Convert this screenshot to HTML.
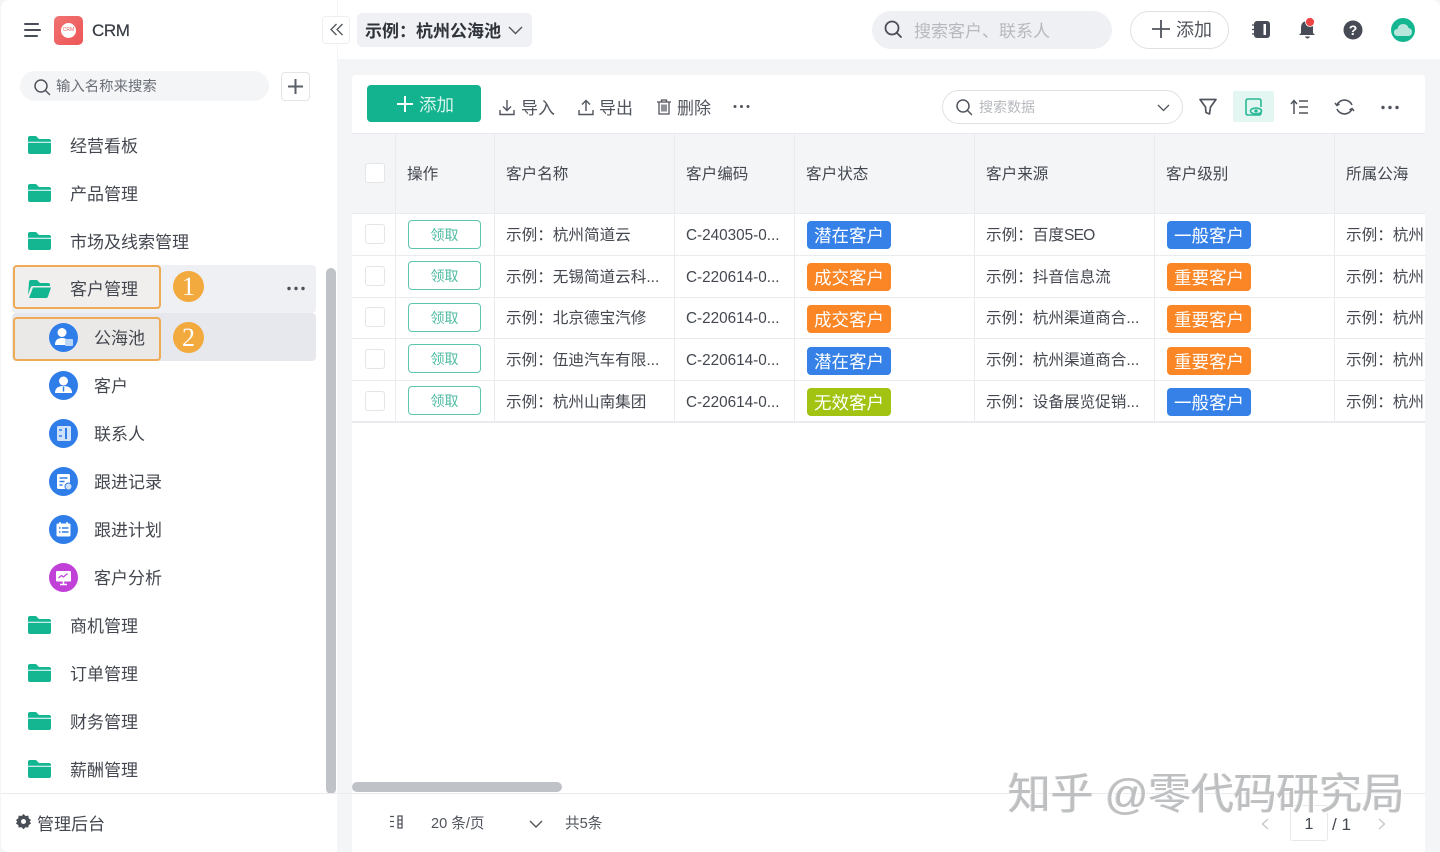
<!DOCTYPE html>
<html lang="zh"><head><meta charset="utf-8"><title>CRM</title>
<style>
*{box-sizing:border-box}
html,body{margin:0;padding:0}
body{width:1440px;height:852px;overflow:hidden;position:relative;background:#f4f5f7;font-family:"Liberation Sans","Noto Sans CJK SC",sans-serif;color:#3b3f47}
.a{position:absolute;white-space:nowrap}
.t{position:absolute;white-space:nowrap;line-height:20px;font-size:15.6px;color:#43474f;margin-top:1px}
.c{font-size:15.300px}
.s{letter-spacing:-.8px}
.m{position:absolute;white-space:nowrap;line-height:24px;font-size:17px;color:#43474f;margin-top:1px}
svg{position:absolute;display:block;overflow:visible}
.line{position:absolute;background:#e9ebee}
.tag{position:absolute;width:84px;height:28px;border-radius:4px;color:#fff;opacity:.97;font-size:17.500px;line-height:30px;text-align:center;white-space:nowrap}
.blue{background:#2f7de8}.or{background:#fb8320}.gr{background:#a0c20a}
.btn{position:absolute;left:408px;width:73px;height:29px;border:1px solid #5fc4ae;border-radius:4px;color:#4dbba2;font-size:14px;line-height:28px;text-align:center;background:#fff}
.cb{position:absolute;left:365px;width:20px;height:20px;border:1px solid #e3e5e8;border-radius:3px;background:#fff}
</style></head><body>

<!-- sidebar -->
<div class="a" style="left:1px;top:0;width:336px;height:852px;background:#fff;border-radius:8px 0 0 8px"></div>
<svg style="left:23px;top:22px" width="18" height="16" fill="none" stroke="#4a4e57" stroke-width="2" stroke-linecap="round"><path d="M2 2h13M2 8h15M2 14h12"/></svg>
<div class="a" style="left:54px;top:16px;width:29px;height:29px;border-radius:5px;background:linear-gradient(135deg,#f27272,#ec5656)"></div>
<div class="a" style="left:61px;top:23px;width:15px;height:15px;border-radius:50%;background:#fff;color:#ec5c5c;font-size:5px;line-height:15px;text-align:center">CRM</div>
<div class="a" style="left:92px;top:19px;font-size:17px;line-height:24px;letter-spacing:-.4px;color:#363a42;-webkit-text-stroke:.2px #363a42">CRM</div>

<div class="a" style="left:20px;top:71px;width:249px;height:30px;border-radius:15px;background:#f4f5f7"></div>
<svg style="left:34px;top:79px" width="16" height="16" fill="none" stroke="#50545c" stroke-width="1.500"><circle cx="7" cy="7" r="6"/><path d="M11.500 11.500l4 4" stroke-linecap="round"/></svg>
<div class="a" style="left:56px;top:77px;font-size:14.400px;line-height:20px;color:#6a6e76">输入名称来搜索</div>
<div class="a" style="left:281px;top:72px;width:29px;height:29px;border:1px solid #e2e4e7;border-radius:4px;background:#fff"></div>
<svg style="left:287px;top:78px" width="17" height="17" stroke="#5a5e66" stroke-width="2"><path d="M8.500 1v15M1 8.500h15"/></svg>

<div class="a" style="left:12px;top:265px;width:304px;height:48px;background:#eff0f4;border-radius:4px"></div>
<div class="a" style="left:12px;top:313px;width:304px;height:48px;background:#e6e8ed;border-radius:4px"></div>
<div class="a" style="left:13px;top:265px;width:148px;height:44px;border:2px solid #eeab53;border-radius:4px;background:#f1efee"></div>
<div class="a" style="left:13px;top:317px;width:148px;height:44px;border:2px solid #eeab53;border-radius:4px;background:#ebe9e7"></div>
<div class="a" style="left:173px;top:271px;width:31px;height:31px;border-radius:50%;background:#f2a93e;color:#fff;font:26px/31px 'Liberation Serif',serif;text-align:center">1</div>
<div class="a" style="left:173px;top:322px;width:31px;height:31px;border-radius:50%;background:#f2a93e;color:#fff;font:26px/31px 'Liberation Serif',serif;text-align:center">2</div>
<svg style="left:287px;top:286px" width="18" height="5" fill="#4b4f57"><circle cx="2" cy="2.500" r="1.700"/><circle cx="9" cy="2.500" r="1.700"/><circle cx="16" cy="2.500" r="1.700"/></svg>

<svg style="left:28px;top:136px" width="23" height="19" fill="#14b691"><path d="M0 2q0-2 2-2h6l3 3h10q2 0 2 2v.8H0zM0 6.800h23V16q0 2-2 2H2q-2 0-2-2z"/></svg>
<div class="m" style="left:70px;top:134px">经营看板</div>
<svg style="left:28px;top:184px" width="23" height="19" fill="#14b691"><path d="M0 2q0-2 2-2h6l3 3h10q2 0 2 2v.8H0zM0 6.800h23V16q0 2-2 2H2q-2 0-2-2z"/></svg>
<div class="m" style="left:70px;top:182px">产品管理</div>
<svg style="left:28px;top:232px" width="23" height="19" fill="#14b691"><path d="M0 2q0-2 2-2h6l3 3h10q2 0 2 2v.8H0zM0 6.800h23V16q0 2-2 2H2q-2 0-2-2z"/></svg>
<div class="m" style="left:70px;top:230px">市场及线索管理</div>
<svg style="left:28px;top:280px" width="23" height="19" fill="#14b691"><path d="M1 2q0-2 2-2h6l3 3h8q2 0 2 2v1H5q-2 0-2.500 2L0 15zM5 7.500h18l-3 9q-.5 1.500-2 1.500H1z"/></svg>
<div class="m" style="left:70px;top:277px">客户管理</div>

<!-- sub icons -->
<svg style="left:49px;top:323px" width="29" height="29"><circle cx="14.500" cy="14.500" r="14.500" fill="#2f7de8"/><circle cx="13" cy="9.500" r="4.500" fill="#fff"/><path d="M6 22q0-7 7-7t7 7z" fill="#fff"/><rect x="16" y="16" width="8" height="7" rx="1" fill="#bcd6f8"/></svg>
<div class="m" style="left:94px;top:326px">公海池</div>
<svg style="left:49px;top:371px" width="29" height="29"><circle cx="14.500" cy="14.500" r="14.500" fill="#2f7de8"/><circle cx="14.500" cy="10" r="4.500" fill="#fff"/><path d="M6 22q0-7 8.500-7T23 22z" fill="#fff"/><path d="M14.500 15.500v5" stroke="#2f7de8" stroke-width="1.500"/></svg>
<div class="m" style="left:94px;top:374px">客户</div>
<svg style="left:49px;top:419px" width="29" height="29"><circle cx="14.500" cy="14.500" r="14.500" fill="#2f7de8"/><rect x="8" y="7" width="14" height="15" rx="1.500" fill="#cfe1fa"/><rect x="16" y="9" width="2" height="11" fill="#2f7de8"/><path d="M10 11h3M10 17h3" stroke="#2f7de8" stroke-width="1.500"/></svg>
<div class="m" style="left:94px;top:422px">联系人</div>
<svg style="left:49px;top:467px" width="29" height="29"><circle cx="14.500" cy="14.500" r="14.500" fill="#2f7de8"/><rect x="8" y="7" width="13" height="15" rx="1.500" fill="#fff"/><path d="M10.500 11h8M10.500 14.500h5M10.500 18h3" stroke="#2f7de8" stroke-width="1.500"/><circle cx="19.500" cy="19.500" r="3.500" fill="#cfe1fa" stroke="#2f7de8"/></svg>
<div class="m" style="left:94px;top:470px">跟进记录</div>
<svg style="left:49px;top:515px" width="29" height="29"><circle cx="14.500" cy="14.500" r="14.500" fill="#2f7de8"/><rect x="7.500" y="8.500" width="14" height="13" rx="1.500" fill="#fff"/><path d="M11 7v3M18 7v3" stroke="#fff" stroke-width="1.500"/><path d="M10 13h1.500M13 13h6.500M10 17h1.500M13 17h6.500" stroke="#2f7de8" stroke-width="1.500"/></svg>
<div class="m" style="left:94px;top:518px">跟进计划</div>
<svg style="left:49px;top:563px" width="29" height="29"><circle cx="14.500" cy="14.500" r="14.500" fill="#c040d8"/><rect x="7" y="8" width="15" height="10.500" rx="1" fill="#fff"/><path d="M9.500 15l3-2.500 2 1.500 4-3.500" fill="none" stroke="#c040d8" stroke-width="1.200"/><path d="M11 21.500h7M14.500 18.500v3" stroke="#fff" stroke-width="1.500"/></svg>
<div class="m" style="left:94px;top:566px">客户分析</div>

<svg style="left:28px;top:616px" width="23" height="19" fill="#14b691"><path d="M0 2q0-2 2-2h6l3 3h10q2 0 2 2v.8H0zM0 6.800h23V16q0 2-2 2H2q-2 0-2-2z"/></svg>
<div class="m" style="left:70px;top:614px">商机管理</div>
<svg style="left:28px;top:664px" width="23" height="19" fill="#14b691"><path d="M0 2q0-2 2-2h6l3 3h10q2 0 2 2v.8H0zM0 6.800h23V16q0 2-2 2H2q-2 0-2-2z"/></svg>
<div class="m" style="left:70px;top:662px">订单管理</div>
<svg style="left:28px;top:712px" width="23" height="19" fill="#14b691"><path d="M0 2q0-2 2-2h6l3 3h10q2 0 2 2v.8H0zM0 6.800h23V16q0 2-2 2H2q-2 0-2-2z"/></svg>
<div class="m" style="left:70px;top:710px">财务管理</div>
<svg style="left:28px;top:760px" width="23" height="19" fill="#14b691"><path d="M0 2q0-2 2-2h6l3 3h10q2 0 2 2v.8H0zM0 6.800h23V16q0 2-2 2H2q-2 0-2-2z"/></svg>
<div class="m" style="left:70px;top:758px">薪酬管理</div>

<div class="a" style="left:326px;top:268px;width:10px;height:526px;background:#bfc2c7;border-radius:5px"></div>
<div class="line" style="left:1px;top:793px;width:336px;height:1px"></div>
<svg style="left:15px;top:813px" width="17" height="17"><path d="M8.500 1l2 2 2.800-.4.500 2.800 2.300 1.600-1.400 1.500 1.400 2-2.300 1.500-.5 2.500-2.800-.3-2 2-2-2-2.800.3-.5-2.500L.9 10.500l1.400-2L.9 7l2.300-1.600.5-2.800 2.800.4z" fill="#4a4e57"/><circle cx="8.500" cy="8.500" r="2.500" fill="#fff"/></svg>
<div class="m" style="left:37px;top:812px">管理后台</div>

<!-- top bar -->
<div class="a" style="left:338px;top:0;width:1102px;height:59px;background:#fff;border-radius:0 8px 0 0"></div>
<div class="a" style="left:322px;top:16px;width:28px;height:28px;background:#fff;border:1px solid #eceef0;border-radius:4px"></div>
<svg style="left:330px;top:23px" width="14" height="13" fill="none" stroke="#50545c" stroke-width="1.300"><path d="M6.500 1L1 6.500 6.500 12M12.500 1L7 6.500l5.500 5.500"/></svg>
<div class="a" style="left:357px;top:13px;width:175px;height:34px;background:#f0f1f4;border-radius:5px"></div>
<div class="a" style="left:365px;top:20px;font-size:17px;font-weight:700;line-height:24px;color:#2f333a">示例：杭州公海池</div>
<svg style="left:508px;top:26px" width="15" height="9" fill="none" stroke="#50545c" stroke-width="1.400"><path d="M1 1l6.500 6.500L14 1"/></svg>

<div class="a" style="left:872px;top:11px;width:240px;height:38px;border-radius:19px;background:#eff0f4"></div>
<svg style="left:884px;top:20px" width="20" height="20" fill="none" stroke="#4a4e57" stroke-width="1.800"><circle cx="8" cy="8" r="6.500"/><path d="M12.500 12.500l4.500 4.500" stroke-linecap="round"/></svg>
<div class="a" style="left:914px;top:20px;font-size:17px;line-height:24px;color:#b7b9be">搜索客户、联系人</div>
<div class="a" style="left:1130px;top:11px;width:99px;height:38px;border-radius:19px;background:#fff;border:1px solid #dfe1e5"></div>
<svg style="left:1152px;top:20px" width="18" height="18" stroke="#50545c" stroke-width="1.800"><path d="M9 0v18M0 9h18"/></svg>
<div class="a" style="left:1176px;top:18px;font-size:18px;line-height:24px;color:#50545c">添加</div>

<svg style="left:1252px;top:20px" width="19" height="19"><rect x="2" y="1" width="16" height="17" rx="3" fill="#474b55"/><rect x="11.500" y="4" width="2.500" height="11" fill="#fff"/><path d="M0 5h3M0 9.500h3M0 14h3" stroke="#474b55" stroke-width="1.300"/></svg>
<svg style="left:1298px;top:18px" width="19" height="22"><path d="M9.500 3q5.500 0 5.500 7v5l2 2H1l2-2v-5q0-7 6.500-7z" fill="#474b55"/><path d="M7 18.500h5q-1 2-2.500 2T7 18.500z" fill="#474b55"/><circle cx="12" cy="4" r="4.500" fill="#ee4444" stroke="#fff" stroke-width=".8"/></svg>
<svg style="left:1343px;top:20px" width="20" height="20"><circle cx="10" cy="10" r="9.500" fill="#474b55"/><text x="10" y="15" text-anchor="middle" font-family="Liberation Sans" font-weight="700" font-size="14" fill="#fff">?</text></svg>
<svg style="left:1391px;top:18px" width="24" height="24"><circle cx="12" cy="12" r="12" fill="#14b691"/><path d="M6.500 18q-3.500 0-3.500-3.500T6.500 11q1-5 5.500-5 4.500 0 5.500 4 3.500.5 3.500 4t-3.500 4z" fill="#b7e6dc"/></svg>

<!-- content card -->
<div class="a" style="left:352px;top:75px;width:1073px;height:777px;background:#fff;border-radius:3px 3px 0 0"></div>
<div class="a" style="left:367px;top:85px;width:114px;height:37px;background:#14b38f;border-radius:4px"></div>
<svg style="left:397px;top:96px" width="16" height="16" stroke="#fff" stroke-width="2"><path d="M8 0v16M0 8h16"/></svg>
<div class="a" style="left:419px;top:93px;font-size:17.500px;line-height:24px;color:#d8f4ec">添加</div>

<svg style="left:499px;top:99px" width="16" height="17" fill="none" stroke="#50545c" stroke-width="1.400"><path d="M8 1v10M4 7.500L8 11.500l4-4M1 11v4.500h14V11"/></svg>
<div class="a" style="left:521px;top:97px;font-size:17px;line-height:24px;color:#50545c">导入</div>
<svg style="left:578px;top:99px" width="16" height="17" fill="none" stroke="#50545c" stroke-width="1.400"><path d="M8 12V2M4 5.500L8 1.500l4 4M1 11v4.500h14V11"/></svg>
<div class="a" style="left:599px;top:97px;font-size:17px;line-height:24px;color:#50545c">导出</div>
<svg style="left:657px;top:99px" width="14" height="16" fill="none" stroke="#50545c" stroke-width="1.300"><path d="M0 3h14M4.500 3V1h5v2M2 3v12h10V3M5 5.500v7M7 5.500v7M9 5.500v7"/></svg>
<div class="a" style="left:677px;top:97px;font-size:17px;line-height:24px;color:#50545c">删除</div>
<svg style="left:733px;top:104px" width="17" height="5" fill="#50545c"><circle cx="2" cy="2.500" r="1.500"/><circle cx="8.500" cy="2.500" r="1.500"/><circle cx="15" cy="2.500" r="1.500"/></svg>

<div class="a" style="left:942px;top:90px;width:241px;height:34px;border-radius:17px;border:1px solid #dfe1e5;background:#fff"></div>
<svg style="left:956px;top:99px" width="17" height="17" fill="none" stroke="#50545c" stroke-width="1.500"><circle cx="7" cy="7" r="6"/><path d="M11.500 11.500l4 4" stroke-linecap="round"/></svg>
<div class="a" style="left:979px;top:97px;font-size:14px;line-height:20px;color:#b7b9be">搜索数据</div>
<svg style="left:1157px;top:104px" width="13" height="8" fill="none" stroke="#50545c" stroke-width="1.300"><path d="M1 1l5.500 5.500L12 1"/></svg>
<svg style="left:1199px;top:98px" width="18" height="18" fill="none" stroke="#50545c" stroke-width="1.700" stroke-linejoin="round"><path d="M1 1.500h16l-5.500 7.500-1 7-3.500-1.500-.5-5.500z"/></svg>
<div class="a" style="left:1233px;top:91px;width:41px;height:31px;background:#e3f6f2;border-radius:2px"></div>
<svg style="left:1245px;top:98px" width="18" height="18" fill="none" stroke="#2ab896" stroke-width="1.600"><path d="M16 9V3q0-2-2-2H3Q1 1 1 3v12q0 2 2 2h11q2 0 2-2"/><ellipse cx="11" cy="13" rx="5.500" ry="3"/><circle cx="11" cy="13" r="1" fill="#2ab896"/></svg>
<svg style="left:1290px;top:99px" width="19" height="16" fill="none" stroke="#50545c" stroke-width="1.500"><path d="M4 15V2M1 5l3-3.500L7 5M9 2h9M9 8h9M9 14h9"/></svg>
<svg style="left:1335px;top:98px" width="19" height="18" fill="none" stroke="#50545c" stroke-width="1.600"><path d="M2 7a8 7.500 0 0 1 15 0M17 11a8 7.500 0 0 1-15 0"/><path d="M0 5l2 2.500L4.500 6M19 13l-2-2.500L14.500 12"/></svg>
<svg style="left:1381px;top:105px" width="18" height="5" fill="#50545c"><circle cx="2" cy="2.500" r="1.700"/><circle cx="9" cy="2.500" r="1.700"/><circle cx="16" cy="2.500" r="1.700"/></svg>

<!-- table -->
<div class="a" style="left:352px;top:134px;width:1073px;height:80px;background:#f4f5f7"></div>
<div class="line" style="left:352px;top:133px;width:1073px;height:1px"></div>
<div class="line" style="left:352px;top:213px;width:1073px;height:1px"></div>
<div class="line" style="left:352px;top:255px;width:1073px;height:1px"></div>
<div class="line" style="left:352px;top:297px;width:1073px;height:1px"></div>
<div class="line" style="left:352px;top:338px;width:1073px;height:1px"></div>
<div class="line" style="left:352px;top:380px;width:1073px;height:1px"></div>
<div class="line" style="left:352px;top:421px;width:1073px;height:2px"></div>
<div class="line" style="left:395px;top:134px;width:1px;height:288px"></div>
<div class="line" style="left:494px;top:134px;width:1px;height:288px"></div>
<div class="line" style="left:674px;top:134px;width:1px;height:288px"></div>
<div class="line" style="left:794px;top:134px;width:1px;height:288px"></div>
<div class="line" style="left:974px;top:134px;width:1px;height:288px"></div>
<div class="line" style="left:1154px;top:134px;width:1px;height:288px"></div>
<div class="line" style="left:1334px;top:134px;width:1px;height:288px"></div>

<div class="cb" style="top:163px"></div>
<div class="t" style="left:407px;top:164px">操作</div>
<div class="t" style="left:506px;top:164px">客户名称</div>
<div class="t" style="left:686px;top:164px">客户编码</div>
<div class="t" style="left:806px;top:164px">客户状态</div>
<div class="t" style="left:986px;top:164px">客户来源</div>
<div class="t" style="left:1166px;top:164px">客户级别</div>
<div class="t" style="left:1346px;top:164px">所属公海</div>

<div class="cb" style="top:224px"></div><div class="btn" style="top:220px">领取</div>
<div class="t" style="left:506px;top:225px">示例：杭州简道云</div>
<div class="t c" style="left:686px;top:225px">C-240305-0...</div>
<div class="tag blue" style="left:807px;top:221px">潜在客户</div>
<div class="t" style="left:986px;top:225px">示例：百度<span class="s">SEO</span></div>
<div class="tag blue" style="left:1167px;top:221px">一般客户</div>
<div class="t" style="left:1346px;top:225px;width:78px;overflow:hidden">示例：杭州</div>

<div class="cb" style="top:266px"></div><div class="btn" style="top:261px">领取</div>
<div class="t" style="left:506px;top:267px">示例：无锡简道云科...</div>
<div class="t c" style="left:686px;top:267px">C-220614-0...</div>
<div class="tag or" style="left:807px;top:263px">成交客户</div>
<div class="t" style="left:986px;top:267px">示例：抖音信息流</div>
<div class="tag or" style="left:1167px;top:263px">重要客户</div>
<div class="t" style="left:1346px;top:267px;width:78px;overflow:hidden">示例：杭州</div>

<div class="cb" style="top:307px"></div><div class="btn" style="top:303px">领取</div>
<div class="t" style="left:506px;top:308px">示例：北京德宝汽修</div>
<div class="t c" style="left:686px;top:308px">C-220614-0...</div>
<div class="tag or" style="left:807px;top:305px">成交客户</div>
<div class="t" style="left:986px;top:308px">示例：杭州渠道商合...</div>
<div class="tag or" style="left:1167px;top:305px">重要客户</div>
<div class="t" style="left:1346px;top:308px;width:78px;overflow:hidden">示例：杭州</div>

<div class="cb" style="top:349px"></div><div class="btn" style="top:344px">领取</div>
<div class="t" style="left:506px;top:350px">示例：伍迪汽车有限...</div>
<div class="t c" style="left:686px;top:350px">C-220614-0...</div>
<div class="tag blue" style="left:807px;top:347px">潜在客户</div>
<div class="t" style="left:986px;top:350px">示例：杭州渠道商合...</div>
<div class="tag or" style="left:1167px;top:347px">重要客户</div>
<div class="t" style="left:1346px;top:350px;width:78px;overflow:hidden">示例：杭州</div>

<div class="cb" style="top:391px"></div><div class="btn" style="top:386px">领取</div>
<div class="t" style="left:506px;top:392px">示例：杭州山南集团</div>
<div class="t c" style="left:686px;top:392px">C-220614-0...</div>
<div class="tag gr" style="left:807px;top:388px">无效客户</div>
<div class="t" style="left:986px;top:392px">示例：设备展览促销...</div>
<div class="tag blue" style="left:1167px;top:388px">一般客户</div>
<div class="t" style="left:1346px;top:392px;width:78px;overflow:hidden">示例：杭州</div>

<!-- footer -->
<div class="a" style="left:352px;top:782px;width:210px;height:10px;background:#bfc2c7;border-radius:5px"></div>
<div class="line" style="left:338px;top:793px;width:1087px;height:1px"></div>
<svg style="left:389px;top:815px" width="14" height="14" fill="none" stroke="#50545c" stroke-width="1.300"><path d="M1 1.500h4M1 6.500h4M1 11.500h4M9 1h4v12H9zM9 5h4M9 9h4"/></svg>
<div class="a" style="left:431px;top:814px;font-size:14.600px;line-height:20px;color:#50545c">20 条/页</div>
<svg style="left:529px;top:820px" width="14" height="8" fill="none" stroke="#50545c" stroke-width="1.400"><path d="M1 1l6 6 6-6"/></svg>
<div class="a" style="left:565px;top:814px;font-size:14.600px;line-height:20px;color:#50545c">共5条</div>
<svg style="left:1261px;top:818px" width="8" height="12" fill="none" stroke="#c4c6ca" stroke-width="1.300"><path d="M7 1L1.500 6 7 11"/></svg>
<div class="a" style="left:1290px;top:805px;width:38px;height:36px;border:1px solid #e6e8ea;border-radius:3px;background:#fff;font-size:16px;line-height:38px;text-align:center;color:#43474f">1</div>
<div class="a" style="left:1332px;top:814px;font-size:17px;line-height:22px;color:#43474f">/ 1</div>
<svg style="left:1378px;top:818px" width="8" height="12" fill="none" stroke="#c4c6ca" stroke-width="1.300"><path d="M1 1l5.500 5L1 11"/></svg>

<div class="a" style="left:1008px;top:766px;font-size:43px;line-height:58px;color:#bdbfc1;letter-spacing:-.3px;text-shadow:1px 1px 0 #fff,-1px 0 0 #d6d6d6">知乎 @零代码研究局</div>
</body></html>
